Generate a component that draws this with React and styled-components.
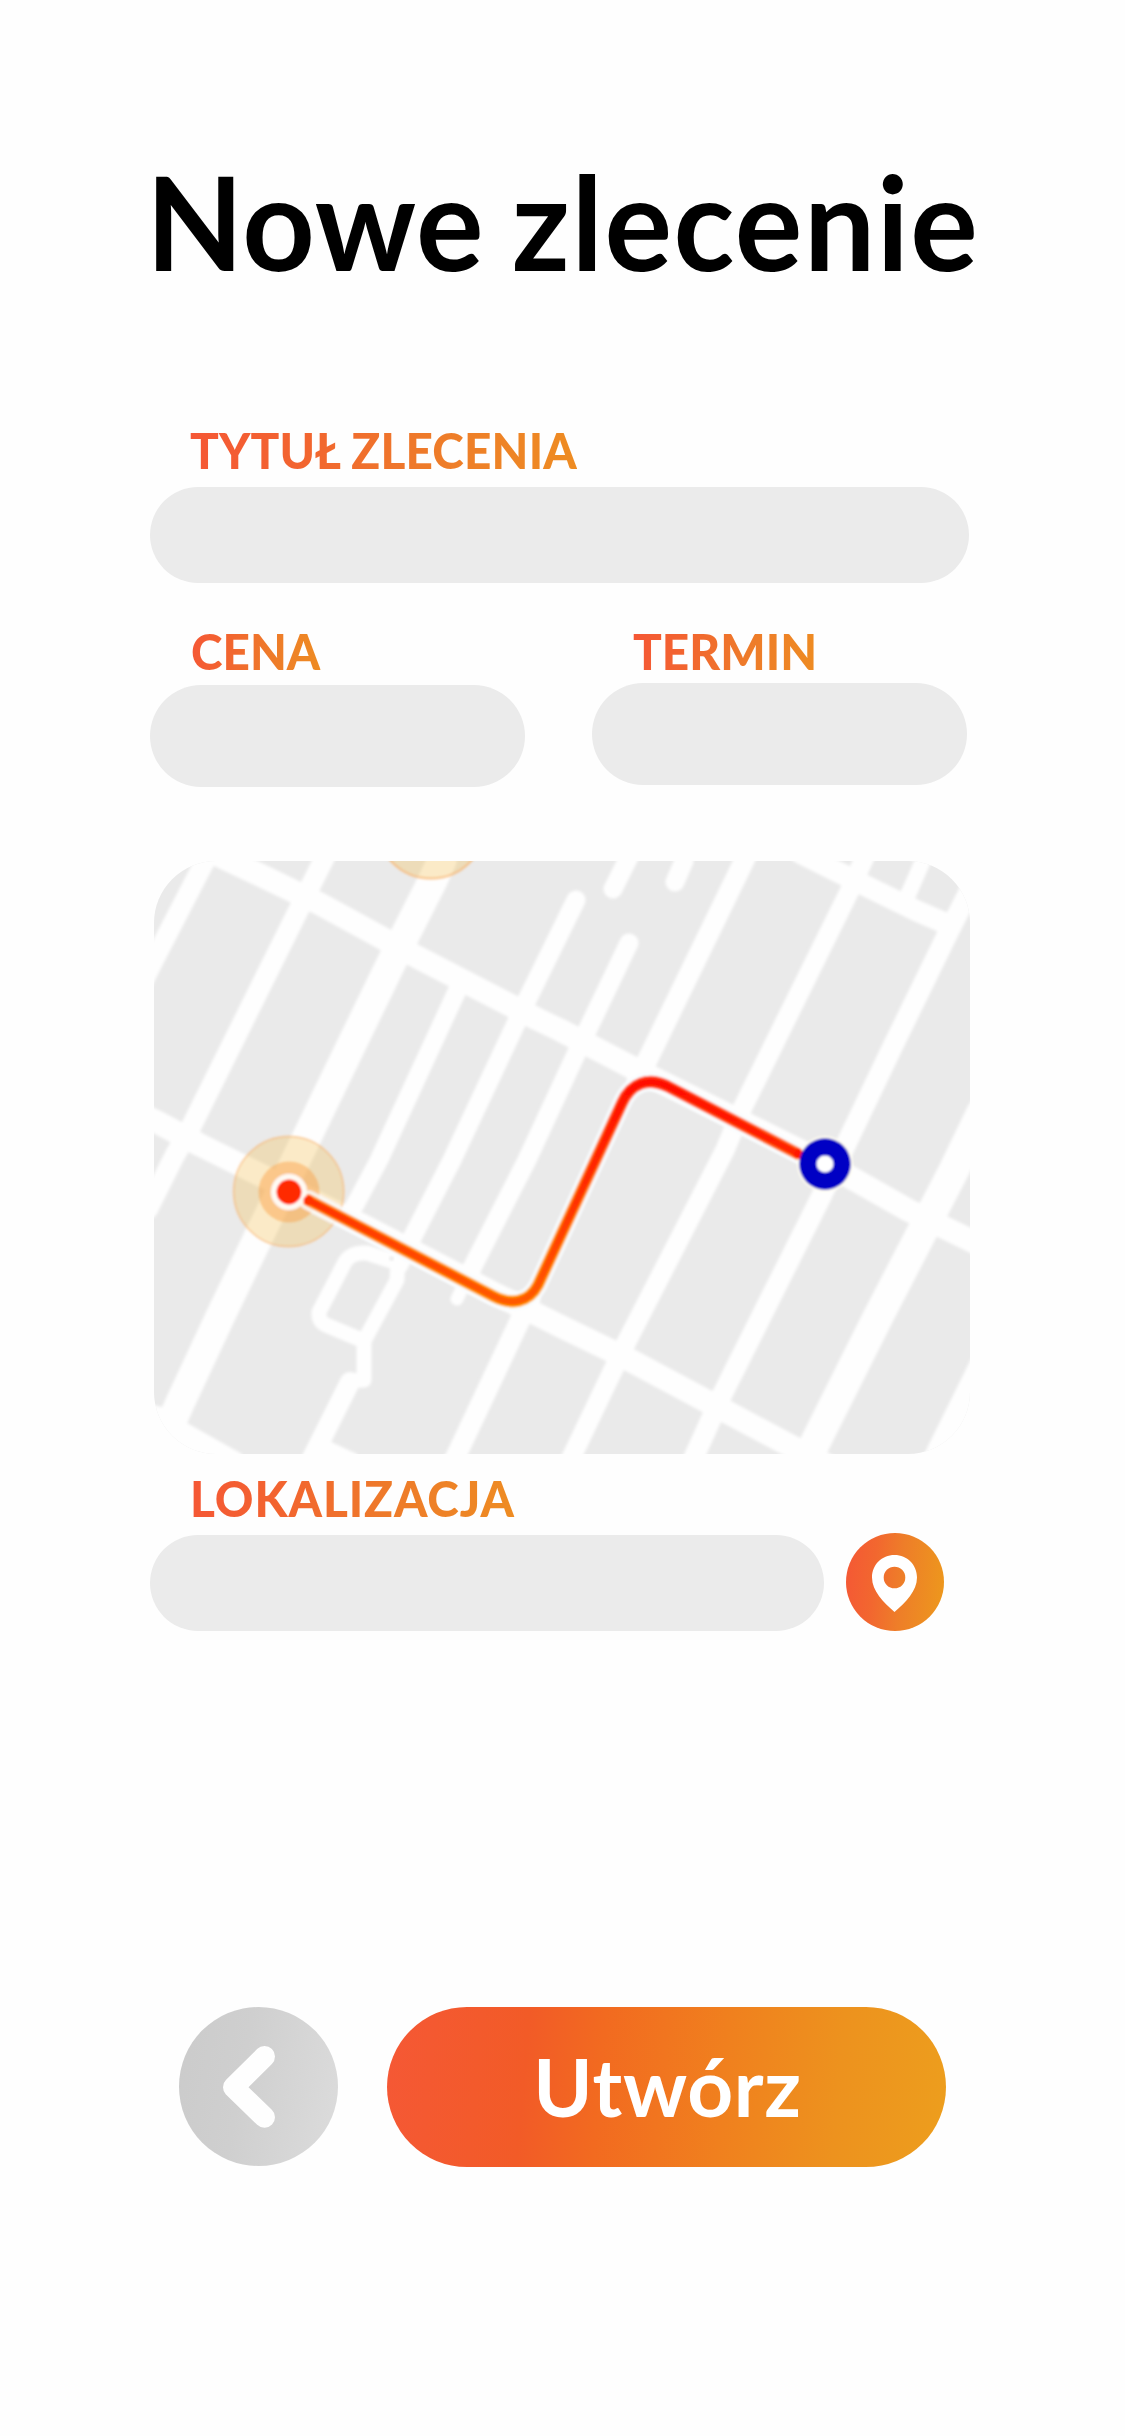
import React from "react";
import styled, { createGlobalStyle } from "styled-components";

const GlobalStyle = createGlobalStyle`
  * { box-sizing: border-box; }
  body { margin: 0; background: #fefefe; font-family: Lato, "Open Sans", sans-serif; }
`;

const Screen = styled.main`
  width: 1125px;
  height: 2436px;
  padding: 143px 150px 0;
  display: flex;
  flex-direction: column;
  align-items: flex-start;
  overflow: hidden;
  background: #fefefe;
`;

const Title = styled.h1`
  margin: 0 0 122px -4px;
  font-size: 130px;
  line-height: 156px;
  font-weight: 700;
  letter-spacing: 0.87px;
  word-spacing: -4.3px;
  white-space: nowrap;
  color: #000;
  transform: scaleX(0.973);
  transform-origin: left;
`;

const Word = styled.span`
  letter-spacing: ${(p) => p.$spacing}px;
`;

const Field = styled.label`
  display: flex;
  flex-direction: column;
  align-items: flex-start;
  gap: ${(p) => p.$gap}px;
`;

const Caption = styled.span`
  margin-left: ${(p) => p.$indent || 40}px;
  font-size: 49px;
  line-height: 59px;
  font-weight: 900;
  letter-spacing: ${(p) => p.$spacing || 0}px;
  white-space: nowrap;
  color: transparent;
  background: linear-gradient(95deg, #f55735 0%, #f2652f 30%, #ee7a2a 60%, #ee8c22 100%);
  background-clip: text;
  -webkit-background-clip: text;
  transform: scaleX(0.975);
  transform-origin: left;
`;

const Input = styled.input`
  display: block;
  width: ${(p) => p.$w}px;
  height: ${(p) => p.$h}px;
  padding: 0 40px;
  border: 0;
  border-radius: 51px;
  outline: 0;
  background: #ebebeb;
  font: 400 40px Lato, sans-serif;
`;

const Pair = styled.div`
  display: flex;
  align-items: flex-start;
  gap: 67px;
  height: 165px;
  margin: 39px 0 74px;
`;

const MapCard = styled.div`
  width: 816px;
  height: 593px;
  margin: 0 0 15px 4px;
  border-radius: 62px;
  overflow: hidden;
  background: #eaeaea;

  svg { display: block; }
`;

const LocationRow = styled.div`
  display: flex;
  align-items: flex-end;
  gap: 22px;
  height: 98px;
`;

const PinButton = styled.button`
  display: grid;
  place-items: center;
  width: 98px;
  height: 98px;
  padding: 3px 1px 0 0;
  border: 0;
  border-radius: 50%;
  background: linear-gradient(95deg, #f55735 0%, #f2672f 30%, #ee7d29 55%, #ed991c 100%);
`;

const Actions = styled.div`
  display: flex;
  gap: 49px;
  margin: 376px 0 0 29px;
`;

const BackButton = styled.button`
  width: 159px;
  height: 159px;
  padding: 0;
  border: 0;
  border-radius: 50%;
  background: linear-gradient(100deg, #cbcbcb 0%, #cfcfcf 40%, #dcdcdc 100%);

  svg { display: block; }
`;

const SubmitButton = styled.button`
  width: 559px;
  height: 160px;
  padding: 0 0 2px 2px;
  border: 0;
  border-radius: 80px;
  background: linear-gradient(95deg, #f55835 0%, #f25b27 25%, #f26a20 38%, #f0801e 60%, #ed921e 80%, #ed9e1d 100%);
  color: #fff;
  font: 700 80px/96px Lato, sans-serif;
  letter-spacing: 0.65px;
`;

const streets = [
  [20, "M215 841 L205 861 L154 960 L140 988"],
  [23, "M205 849 L260 875 L320 904 L417 957 L537 1019 L560 1030 L637 1070 L825 1163 L908 1210 L980 1245"],
  [20.5, "M330 846 L323 861 L300 907 L191 1127 L175 1155 L148 1209"],
  [29.5, "M442 860 L433 880 L396 953 L349 1050 L307 1137 L257 1240 L220 1317 L180 1403 L155 1460"],
  [18.5, "M457 991 L379 1160 L355 1205"],
  [19, "M576 900 L527 1000 L452 1160 L412 1238 L399 1265"],
  [19, "M629 943 L577 1052 L527 1160 L471 1270"],
  [13, "M471 1270 L457 1299"],
  [19, "M629 857 L613 889"],
  [19, "M684 861 L675 882"],
  [20.5, "M750 848 L744 861 L646 1063 L637 1080"],
  [19.5, "M870 846 L863 861 L851 888 L742 1109 L725 1150 L624 1347 L573 1454 L567 1466"],
  [21, "M800 853 L820 863 L870 888 L917 911 L947 924"],
  [16, "M928 850 L922 863 L908 895"],
  [20.5, "M976 878 L948 933 L891 1050 L850 1136 L822 1195 L721 1397 L690 1466"],
  [30.5, "M982 1112 L954 1170 L878 1317 L818 1437 L800 1474"],
  [23, "M140 1114 L157 1122 L200 1145 L362 1225 L493 1293 L540 1316 L560 1326 L624 1357 L712 1404 L800 1451 L830 1467"],
  [20.5, "M530 1300 L521 1318 L457 1454 L450 1468"],
  [15, "M398 1263 L367 1253 Q351 1252 345 1262 L319 1312 Q318 1321 326 1325 L364 1341 L397 1280 L398 1256"],
  [15, "M364 1341 L364 1380 L348 1381"],
  [20, "M350 1382 L307 1468"],
];

const ROUTE =
  "M308 1200 L493 1296 C512 1306 529 1302 538 1285 C551 1258 586 1181 622 1103 C631 1083 648 1077 667 1086 L808 1159";

function RouteMap() {
  return (
    <svg width="816" height="593" viewBox="154 861 816 593" role="img" aria-label="Mapa">
      <defs>
        <filter id="soft" x="-5%" y="-5%" width="110%" height="110%">
          <feGaussianBlur stdDeviation="1.4" />
        </filter>
        <filter id="edge" x="-10%" y="-10%" width="120%" height="120%">
          <feGaussianBlur stdDeviation="0.9" />
        </filter>
        <linearGradient id="heat" gradientUnits="userSpaceOnUse" x1="0" y1="1090" x2="0" y2="1300">
          <stop offset="0" stopColor="#ff1000" />
          <stop offset="0.5" stopColor="#ff3000" />
          <stop offset="1" stopColor="#ff5a00" />
        </linearGradient>
        <linearGradient id="fringe" gradientUnits="userSpaceOnUse" x1="0" y1="1090" x2="0" y2="1300">
          <stop offset="0" stopColor="#ff4a20" />
          <stop offset="0.5" stopColor="#ff8a18" />
          <stop offset="1" stopColor="#ffa000" />
        </linearGradient>
      </defs>
      <g fill="none" stroke="#fefefe" strokeLinecap="round" strokeLinejoin="round" filter="url(#soft)">
        {streets.map(([width, d]) => (
          <path key={d} d={d} strokeWidth={width} />
        ))}
        <g fill="#fefefe" stroke="none">
          <path d="M140 1402 L175 1410 L187 1423 L242 1454 L242 1480 L140 1480 Z" />
          <path d="M316 1436 L327 1440 L357 1454 L357 1480 L300 1480 Z" />
          <path d="M972 1357 L928 1446 L915 1475 L990 1475 Z" />
        </g>
      </g>
      <circle cx="391.500" cy="1258.500" r="2.500" fill="#efefef" filter="url(#edge)" />
      <g filter="url(#edge)">
        <circle cx="431" cy="824" r="54.500" fill="#f5b83c" fillOpacity="0.28" stroke="#f9b26a" strokeOpacity="0.6" strokeWidth="2.500" />
        <circle cx="288.700" cy="1191.500" r="55" fill="#f5b83c" fillOpacity="0.28" stroke="#f9b26a" strokeOpacity="0.5" strokeWidth="2" />
        <circle cx="289" cy="1192" r="30.500" fill="#fba24a" fillOpacity="0.48" />
        <path d={ROUTE} fill="none" stroke="#f9fdff" strokeWidth="19" strokeLinecap="round" strokeLinejoin="round" strokeOpacity="0.85" />
        <path d={ROUTE} fill="none" stroke="url(#fringe)" strokeWidth="12" strokeLinecap="round" strokeLinejoin="round" />
        <path d={ROUTE} fill="none" stroke="url(#heat)" strokeWidth="7.500" strokeLinecap="round" strokeLinejoin="round" />
        <circle cx="289" cy="1192" r="18" fill="#fffaf4" />
        <circle cx="289" cy="1192" r="12.500" fill="#ff2a00" />
        <circle cx="308.500" cy="1200.500" r="5" fill="#ff3000" />
        <circle cx="825" cy="1164" r="28" fill="#fffdf0" />
        <path d="M795 1152 L808 1159" stroke="#ff1800" strokeWidth="9" />
        <circle cx="825" cy="1164" r="25.800" fill="#0000c4" />
        <circle cx="825" cy="1164" r="8.500" fill="#fff" />
      </g>
    </svg>
  );
}

function PinIcon() {
  return (
    <svg width="45" height="57" viewBox="0 0 45 57" aria-hidden="true">
      <path
        fill="#fff"
        fillRule="evenodd"
        d="M22.500 0 C9.800 0 0 9.900 0 22.500 C0 36 11.500 47.500 22.500 57 C33.500 47.500 45 36 45 22.500 C45 9.900 35.200 0 22.500 0 Z M22.500 11.700 A10.800 10.800 0 1 1 22.500 33.300 A10.800 10.800 0 1 1 22.500 11.700 Z"
      />
    </svg>
  );
}

function BackIcon() {
  return (
    <svg width="159" height="159" viewBox="0 0 159 159" aria-hidden="true">
      <path
        d="M85.500 49.500 L54.500 80.300 L85.500 110.300"
        fill="none"
        stroke="#fefefe"
        strokeWidth="21"
        strokeLinecap="round"
        strokeLinejoin="round"
      />
    </svg>
  );
}

export default function App() {
  return (
    <>
      <GlobalStyle />
      <Screen>
        <Title>
          Nowe <Word $spacing={1.55}>zlecenie</Word>
        </Title>
        <Field $gap={7}>
          <Caption $spacing={0.15}>TYTUŁ ZLECENIA</Caption>
          <Input $w={819} $h={96} />
        </Field>
        <Pair>
          <Field $gap={4}>
            <Caption $indent={41}>CENA</Caption>
            <Input $w={375} $h={102} />
          </Field>
          <Field $gap={2}>
            <Caption $indent={41}>TERMIN</Caption>
            <Input $w={375} $h={102} />
          </Field>
        </Pair>
        <MapCard>
          <RouteMap />
        </MapCard>
        <Field as="div" $gap={5}>
          <Caption as="label" htmlFor="location" $spacing={0.9}>LOKALIZACJA</Caption>
          <LocationRow>
            <Input id="location" $w={674} $h={96} />
            <PinButton aria-label="Lokalizacja">
              <PinIcon />
            </PinButton>
          </LocationRow>
        </Field>
        <Actions>
          <BackButton aria-label="Wstecz">
            <BackIcon />
          </BackButton>
          <SubmitButton>Utwórz</SubmitButton>
        </Actions>
      </Screen>
    </>
  );
}
